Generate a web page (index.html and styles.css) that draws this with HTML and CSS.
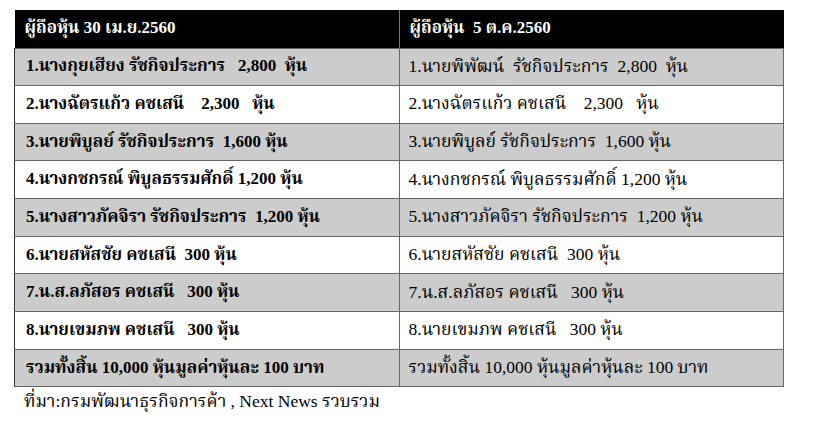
FILE: index.html
```html
<!DOCTYPE html>
<html lang="th">
<head>
<meta charset="utf-8">
<link rel="stylesheet" href="styles.css">
</head>
<body>
<div class="wrap">
<table class="shares">
<thead>
<tr><th>ผู้ถือหุ้น 30 เม.ย.2560</th><th>ผู้ถือหุ้น&nbsp; 5 ต.ค.2560</th></tr>
</thead>
<tbody>
<tr class="g"><td>1.นางกุยเฮียง รัชกิจประการ&nbsp;&nbsp; 2,800&nbsp; หุ้น</td><td>1.นายพิพัฒน์&nbsp; รัชกิจประการ&nbsp; 2,800&nbsp; หุ้น</td></tr>
<tr><td>2.นางฉัตรแก้ว คชเสนี&nbsp;&nbsp;&nbsp; 2,300&nbsp;&nbsp; หุ้น</td><td>2.นางฉัตรแก้ว คชเสนี&nbsp;&nbsp;&nbsp; 2,300&nbsp;&nbsp; หุ้น</td></tr>
<tr class="g"><td>3.นายพิบูลย์ รัชกิจประการ&nbsp; 1,600 หุ้น</td><td>3.นายพิบูลย์ รัชกิจประการ&nbsp; 1,600 หุ้น</td></tr>
<tr><td>4.นางกชกรณ์ พิบูลธรรมศักดิ์ 1,200 หุ้น</td><td>4.นางกชกรณ์ พิบูลธรรมศักดิ์ 1,200 หุ้น</td></tr>
<tr class="g"><td>5.นางสาวภัคจิรา รัชกิจประการ&nbsp; 1,200 หุ้น</td><td>5.นางสาวภัคจิรา รัชกิจประการ&nbsp; 1,200 หุ้น</td></tr>
<tr><td>6.นายสหัสชัย คชเสนี&nbsp; 300 หุ้น</td><td>6.นายสหัสชัย คชเสนี&nbsp; 300 หุ้น</td></tr>
<tr class="g"><td>7.น.ส.ลภัสอร คชเสนี&nbsp;&nbsp; 300 หุ้น</td><td>7.น.ส.ลภัสอร คชเสนี&nbsp;&nbsp; 300 หุ้น</td></tr>
<tr><td>8.นายเขมภพ คชเสนี&nbsp;&nbsp; 300 หุ้น</td><td>8.นายเขมภพ คชเสนี&nbsp;&nbsp; 300 หุ้น</td></tr>
<tr class="g"><td>รวมทั้งสิ้น 10,000 หุ้นมูลค่าหุ้นละ 100 บาท</td><td>รวมทั้งสิ้น 10,000 หุ้นมูลค่าหุ้นละ 100 บาท</td></tr>
</tbody>
</table>
<p class="src">ที่มา:กรมพัฒนาธุรกิจการค้า , Next News รวบรวม</p>
</div>
</body>
</html>
```
FILE: styles.css
```css
html, body { margin: 0; padding: 0; background: #fff; }
body { font-family: "Liberation Serif", "Noto Serif Thai", serif; color: #000; }
.wrap { padding: 10px 0 0 14px; }
.shares {
  border-collapse: collapse;
  width: 770px;
  table-layout: fixed;
  font-size: 17px;
}
.shares th {
  background: #000;
  color: #fff;
  text-align: left;
  font-weight: bold;
  height: 38px;
  padding: 0 10px;
  box-sizing: border-box;
  border-right: 1px solid #777;
}
.shares th:last-child { border-right: 0; }
.shares td {
  height: 37.67px;
  padding: 0 10px;
  box-sizing: border-box;
  border: 1px solid #666;
  white-space: nowrap;
}
.shares td:first-child { font-weight: bold; padding-left: 11px; border-left: 1px solid #333; }
.shares td:last-child { padding-left: 9px; font-size: 17.5px; }
.shares tr.g td { background: #cccccc; }
.src { margin: 1px 0 0 10px; font-size: 17.5px; }
```
